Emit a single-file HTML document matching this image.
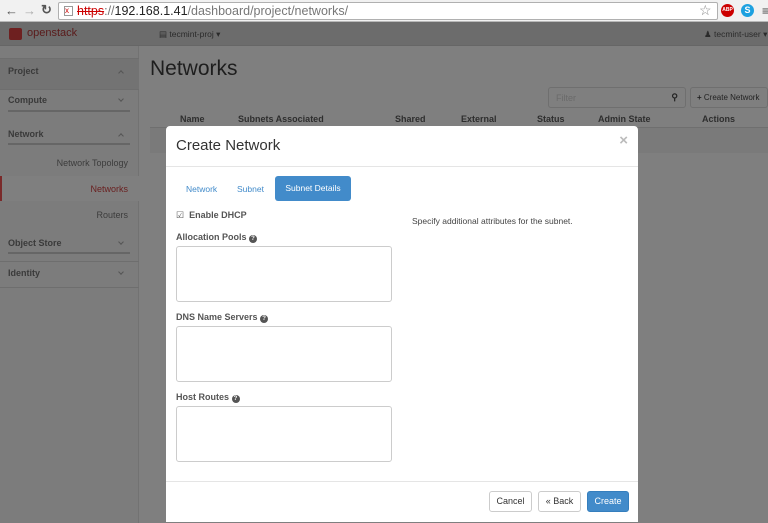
<!DOCTYPE html>
<html><head><meta charset="utf-8"><style>
*{box-sizing:border-box;margin:0;padding:0}
body{width:768px;height:523px;overflow:hidden;font-family:"Liberation Sans",sans-serif;background:#7f7f7f;position:relative}
.abs{position:absolute}
.bar{left:0;top:0;width:768px;height:22px;background:#f1f1f1;border-bottom:1px solid #b8b8b8}
.url{left:58px;top:2px;width:660px;height:18px;background:#fff;border:1px solid #b0b0b0;border-radius:2px;font-size:12.5px;line-height:16px;padding-left:18px;color:#777}
.url b{font-weight:normal;color:#222}
.hdr{left:0;top:22px;width:768px;height:24px;background:#6c6c6c;border-bottom:1px solid #666}
.side{left:0;top:46px;width:139px;height:477px;background:#7c7c7c;border-right:1px solid #727272}
.side .it{position:absolute;left:0;width:139px;font-size:9px;font-weight:bold;color:#3a3a3a;padding-left:8px}
.side .sub{position:absolute;right:10px;font-size:9px;color:#3c3c3c}
.ch{position:absolute;right:15px;width:4px;height:4px;border-left:1px solid #555;border-top:1px solid #555}
.up{transform:rotate(45deg)}
.dn{transform:rotate(225deg)}
.tx{font-size:9px;color:#2e2e2e;font-weight:bold}
.modal{left:166px;top:126px;width:472px;height:396px;background:#fff;border-radius:4px 4px 0 0}
.ta{position:absolute;left:10px;width:216px;height:56px;border:1px solid #ccc;border-radius:3px}
.lbl{position:absolute;left:10px;font-size:9px;font-weight:bold;color:#555}
.q{display:inline-block;width:8px;height:8px;border-radius:50%;background:#555;color:#fff;font-size:6px;line-height:8px;text-align:center;vertical-align:0}
.btn{position:absolute;top:365px;height:21px;border:1px solid #ccc;border-radius:3px;font-size:9px;line-height:19px;text-align:center;color:#333;background:#fff}
</style></head><body>
<div class="abs bar"></div>
<div class="abs" style="left:5px;top:3px;font-size:13px;color:#555">&#8592;</div>
<div class="abs" style="left:23px;top:3px;font-size:13px;color:#aaa">&#8594;</div>
<div class="abs" style="left:41px;top:2px;font-size:13px;color:#555;font-weight:bold">&#8635;</div>
<div class="abs url"><span style="color:#c00;text-decoration:line-through">https</span>://<b>192.168.1.41</b>/dashboard/project/networks/</div>
<div class="abs" style="left:64px;top:6px;width:9px;height:10px;border:1px solid #999;color:#c00;font-size:8px;line-height:8px">x</div>
<div class="abs" style="left:699px;top:2px;font-size:14px;color:#888">&#9734;</div>
<div class="abs" style="left:721px;top:4px;width:13px;height:13px;border-radius:50%;background:#c00;color:#fff;font-size:5px;line-height:13px;text-align:center;font-weight:bold">ABP</div>
<div class="abs" style="left:741px;top:4px;width:13px;height:13px;border-radius:50%;background:#1da1e0;color:#fff;font-size:9px;line-height:13px;text-align:center;font-weight:bold">S</div>
<div class="abs" style="left:762px;top:4px;font-size:12px;color:#444">&#8801;</div>
<div class="abs hdr"></div>
<div class="abs" style="left:9px;top:28px;width:13px;height:12px;background:#6e2020;border-radius:2px"></div>
<div class="abs" style="left:27px;top:27px;font-size:11px;color:#5a1a1a">open<span>stack</span></div>
<div class="abs" style="left:159px;top:29px;font-size:8.5px;color:#2a2a2a">&#9636; tecmint-proj &#9662;</div>
<div class="abs" style="left:704px;top:29px;font-size:8.5px;color:#2a2a2a">&#9823; tecmint-user &#9662;</div>
<div class="abs side">
<div class="abs" style="left:0;top:12px;width:139px;height:32px;background:#737373;border-top:1px solid #6e6e6e;border-bottom:1px solid #6e6e6e"></div>
<div class="it" style="top:20px">Project</div><div class="ch up" style="top:25px"></div>
<div class="it" style="top:49px">Compute</div><div class="ch dn" style="top:51px"></div>
<div class="abs" style="left:8px;top:64px;width:122px;height:2px;background:#666"></div>
<div class="it" style="top:83px">Network</div><div class="ch up" style="top:88px"></div>
<div class="abs" style="left:8px;top:97px;width:122px;height:2px;background:#666"></div>
<div class="sub" style="top:112px">Network Topology</div>
<div class="abs" style="left:0;top:130px;width:139px;height:25px;background:#7f7f7f;border-left:2px solid #7a2a2a"></div>
<div class="sub" style="top:138px;color:#6a2020">Networks</div>
<div class="sub" style="top:164px">Routers</div>
<div class="it" style="top:192px">Object Store</div><div class="ch dn" style="top:194px"></div>
<div class="abs" style="left:8px;top:206px;width:122px;height:2px;background:#666"></div>
<div class="abs" style="left:0;top:215px;width:139px;height:1px;background:#6e6e6e"></div>
<div class="it" style="top:222px">Identity</div><div class="ch dn" style="top:224px"></div>
<div class="abs" style="left:0;top:241px;width:139px;height:1px;background:#6e6e6e"></div>
</div>
<div class="abs" style="left:150px;top:57px;font-size:21px;color:#1e1e1e">Networks</div>
<div class="abs" style="left:548px;top:87px;width:138px;height:21px;border:1px solid #6f6f6f;border-radius:3px;font-size:9px;color:#6a6a6a;padding:5px 7px">Filter<span style="position:absolute;right:7px;top:4px;color:#222;font-weight:bold">&#9906;</span></div>
<div class="abs" style="left:690px;top:87px;width:78px;height:21px;border:1px solid #6f6f6f;border-radius:3px;font-size:8px;color:#222;padding:5px 6px"><b>+</b> Create Network</div>
<div class="abs tx" style="left:180px;top:114px">Name</div>
<div class="abs tx" style="left:238px;top:114px">Subnets Associated</div>
<div class="abs tx" style="left:395px;top:114px">Shared</div>
<div class="abs tx" style="left:461px;top:114px">External</div>
<div class="abs tx" style="left:537px;top:114px">Status</div>
<div class="abs tx" style="left:598px;top:114px">Admin State</div>
<div class="abs tx" style="left:702px;top:114px">Actions</div>
<div class="abs" style="left:150px;top:127px;width:618px;height:1px;background:#6f6f6f"></div>
<div class="abs" style="left:150px;top:128px;width:618px;height:25px;background:#7a7a7a"></div>
<div class="abs modal">
<div class="abs" style="left:10px;top:11px;font-size:15px;color:#333">Create Network</div>
<div class="abs" style="right:10px;top:6px;font-size:15px;color:#bbb;font-weight:bold">&#215;</div>
<div class="abs" style="left:0;top:40px;width:472px;height:1px;background:#e5e5e5"></div>
<div class="abs" style="left:20px;top:58px;font-size:8.5px;color:#428bca">Network</div>
<div class="abs" style="left:71px;top:58px;font-size:8.5px;color:#428bca">Subnet</div>
<div class="abs" style="left:109px;top:50px;width:76px;height:25px;background:#428bca;border-radius:3px;color:#fff;font-size:8.5px;line-height:25px;text-align:center">Subnet Details</div>
<div class="abs" style="left:10px;top:84px;font-size:9px;color:#555"><span style="font-size:9px">&#9745;</span>&nbsp; <b>Enable DHCP</b></div>
<div class="abs" style="left:246px;top:90px;font-size:8.5px;color:#444">Specify additional attributes for the subnet.</div>
<div class="lbl" style="top:106px">Allocation Pools <span class="q">?</span></div>
<div class="ta" style="top:120px"></div>
<div class="lbl" style="top:186px">DNS Name Servers <span class="q">?</span></div>
<div class="ta" style="top:200px"></div>
<div class="lbl" style="top:266px">Host Routes <span class="q">?</span></div>
<div class="ta" style="top:280px"></div>
<div class="abs" style="left:0;top:355px;width:472px;height:1px;background:#e5e5e5"></div>
<div class="btn" style="left:323px;width:43px">Cancel</div>
<div class="btn" style="left:372px;width:43px">&#171; Back</div>
<div class="btn" style="left:421px;width:42px;background:#428bca;border-color:#357ebd;color:#fff">Create</div>
</div>
</body></html>
